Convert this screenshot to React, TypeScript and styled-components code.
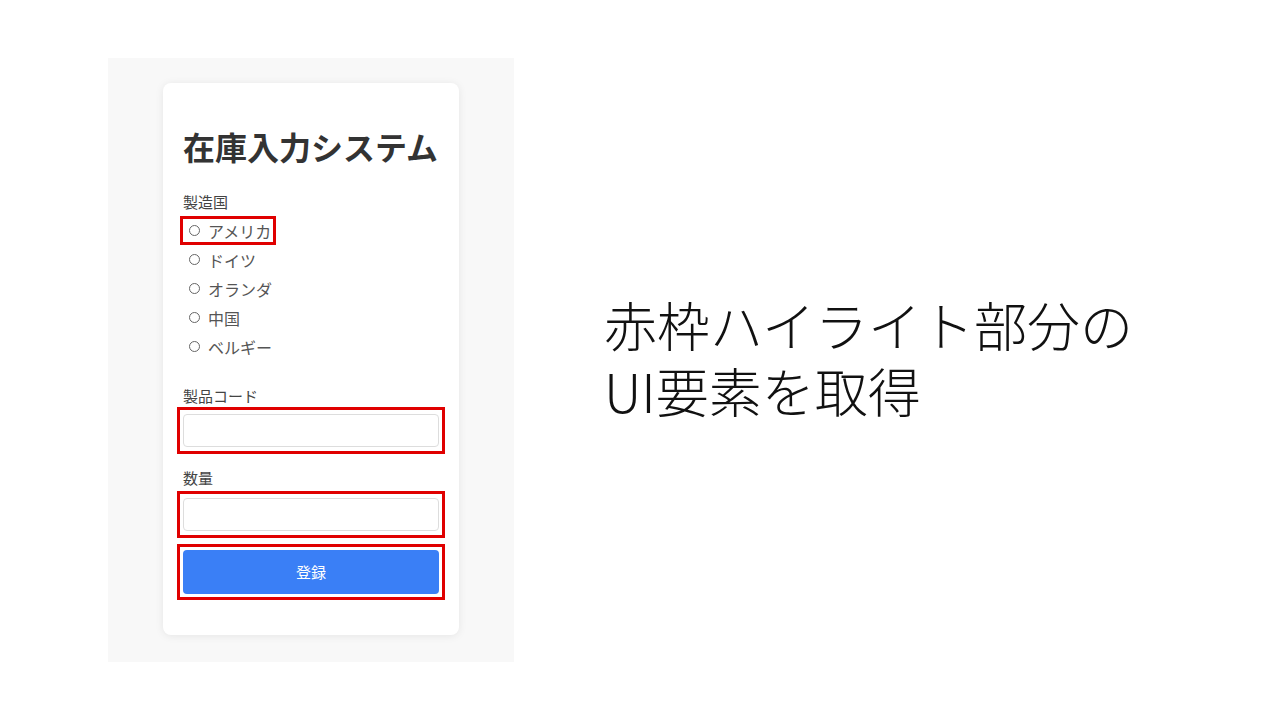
import React, { useState } from "react";
import styled, { createGlobalStyle } from "styled-components";

const GlobalStyle = createGlobalStyle`
  html, body {
    margin: 0;
    padding: 0;
    background: #ffffff;
  }
  body {
    font-family: "Noto Sans CJK JP", "Noto Sans", sans-serif;
  }
`;

const Slide = styled.div`
  width: 1280px;
  height: 720px;
  display: flex;
  align-items: center;
  background: #ffffff;
`;

const Preview = styled.div`
  margin-left: 108px;
  width: 406px;
  height: 604px;
  background: #f8f8f8;
  display: flex;
  justify-content: center;
  align-items: flex-start;
  padding-top: 25px;
  box-sizing: border-box;
`;

const Card = styled.div`
  width: 296px;
  box-sizing: border-box;
  padding: 44px 20px 35px;
  background: #ffffff;
  border-radius: 8px;
  box-shadow: 0 1px 8px rgba(0, 0, 0, 0.08);
  display: flex;
  flex-direction: column;
`;

const Title = styled.h1`
  margin: 0 0 27px;
  font-size: 32px;
  line-height: 38px;
  font-weight: 700;
  color: #333333;
  white-space: nowrap;
`;

const FieldLabel = styled.div<{ $gap?: number }>`
  font-size: 15px;
  line-height: 20px;
  color: #444444;
  margin-bottom: ${(p) => p.$gap ?? 1}px;
`;

const RadioList = styled.div`
  display: flex;
  flex-direction: column;
  margin-bottom: 25px;
`;

const RadioRow = styled.label<{ $highlight?: boolean }>`
  display: flex;
  align-items: center;
  gap: 8px;
  height: 29px;
  box-sizing: border-box;
  padding-left: 6px;
  align-self: flex-start;
  border: 3px solid ${(p) => (p.$highlight ? "#e00000" : "transparent")};
  margin-left: -3px;
  padding-right: ${(p) => (p.$highlight ? "2px" : "0")};
  font-size: 16px;
  color: #555555;
  cursor: pointer;
`;

const RadioDot = styled.input`
  appearance: none;
  margin: 0;
  width: 11px;
  height: 11px;
  border: 1px solid #666666;
  border-radius: 50%;
  box-sizing: border-box;
  background: #ffffff;
  &:checked {
    background: radial-gradient(circle, #3b82f6 45%, #ffffff 50%);
    border-color: #3b82f6;
  }
`;

const Highlight = styled.div<{ $pad: number }>`
  border: 3px solid #e00000;
  padding: ${(p) => p.$pad}px 3px;
  margin: 0 -6px;
`;

const TextInput = styled.input`
  display: block;
  width: 100%;
  height: 33px;
  box-sizing: border-box;
  border: 1px solid #dddddd;
  border-radius: 4px;
  padding: 0 8px;
  font-size: 15px;
  outline: none;
  background: #ffffff;
`;

const SubmitButton = styled.button`
  display: block;
  width: 100%;
  height: 44px;
  border: none;
  border-radius: 4px;
  background: #3a7ff6;
  color: #ffffff;
  font-family: "Noto Sans CJK JP", sans-serif;
  font-size: 15px;
  line-height: 40px;
  cursor: pointer;
`;

const Spacer = styled.div<{ $h: number }>`
  height: ${(p) => p.$h}px;
`;

const Caption = styled.div`
  margin-left: 90px;
  font-family: "Noto Sans CJK JP", sans-serif;
  font-weight: 300;
  font-size: 53px;
  line-height: 66px;
  color: #111111;
  margin-top: -6px;
`;

const CaptionLine = styled.div`
  white-space: nowrap;
`;

const countries = ["アメリカ", "ドイツ", "オランダ", "中国", "ベルギー"];

export default function App() {
  const [country, setCountry] = useState("");
  const [code, setCode] = useState("");
  const [qty, setQty] = useState("");

  return (
    <>
      <GlobalStyle />
      <Slide>
        <Preview>
          <Card>
            <Title>在庫入力システム</Title>
            <FieldLabel $gap={4}>製造国</FieldLabel>
            <RadioList>
              {countries.map((c, i) => (
                <RadioRow key={c} $highlight={i === 0}>
                  <RadioDot
                    type="radio"
                    name="country"
                    checked={country === c}
                    onChange={() => setCountry(c)}
                  />
                  {c}
                </RadioRow>
              ))}
            </RadioList>
            <FieldLabel>製品コード</FieldLabel>
            <Highlight $pad={4}>
              <TextInput value={code} onChange={(e) => setCode(e.target.value)} />
            </Highlight>
            <Spacer $h={14} />
            <FieldLabel $gap={3}>数量</FieldLabel>
            <Highlight $pad={4}>
              <TextInput value={qty} onChange={(e) => setQty(e.target.value)} />
            </Highlight>
            <Spacer $h={6} />
            <Highlight $pad={3}>
              <SubmitButton type="button">登録</SubmitButton>
            </Highlight>
          </Card>
        </Preview>
        <Caption>
          <CaptionLine>赤枠ハイライト部分の</CaptionLine>
          <CaptionLine>UI要素を取得</CaptionLine>
        </Caption>
      </Slide>
    </>
  );
}
